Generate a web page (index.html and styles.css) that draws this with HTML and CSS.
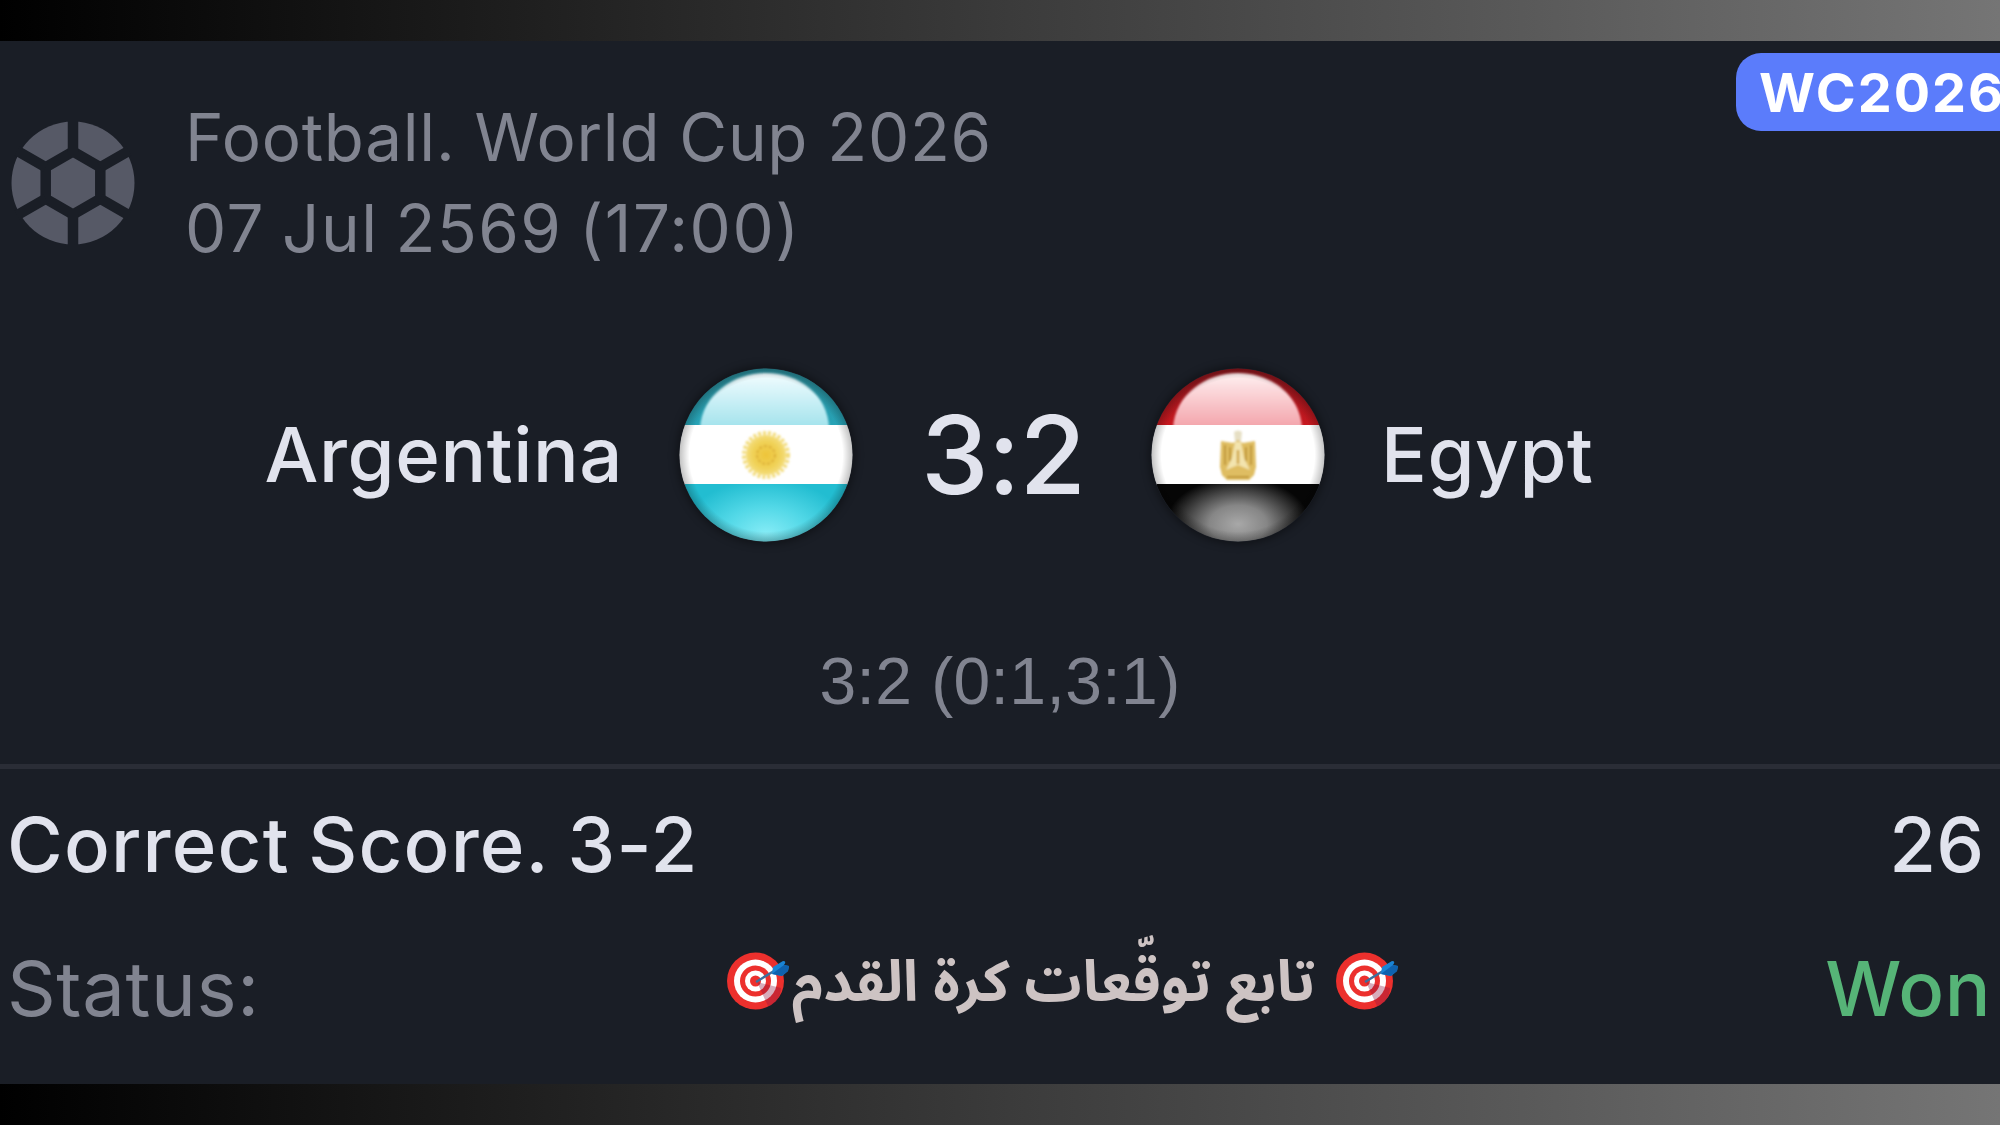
FILE: index.html
```html
<!DOCTYPE html>
<html lang="en">
<head>
    <meta charset="UTF-8">
    <title>Bet Slip</title>
    <link rel="stylesheet" href="styles.css">
</head>
<body>
    <div class="strip"></div>

    <div class="bet-card">
        <span class="badge">WC2026</span>

        <div class="event">
            <svg class="ball" viewBox="-62 -62 124 124">
                <circle r="61.5" fill="#565966"/>
                <g fill="none" stroke="#1a1e26" stroke-width="10.5">
                    <path d="M0-31.5 27.3-15.75V15.75L0 31.5-27.3 15.75V-15.75Z"/>
                    <path d="M0-31.5V-64M27.3-15.75 56-32.3M27.3 15.75 56 32.3M0 31.5V64M-27.3 15.75-56 32.3M-27.3-15.75-56-32.3"/>
                </g>
            </svg>
            <div class="event-info">
                <div class="league">Football. World Cup 2026</div>
                <div class="date">07 Jul 2569 (17:00)</div>
            </div>
        </div>

        <div class="match">
            <div class="team home">Argentina</div>
            <svg class="flag" viewBox="0 0 174 174">
                <defs>
                    <clipPath id="disc"><circle cx="87" cy="87" r="86.5"/></clipPath>
                    <filter id="soft"><feGaussianBlur stdDeviation="1"/></filter>
                    <linearGradient id="arTop" x1="0" y1="0" x2="0" y2="1">
                        <stop offset="0" stop-color="#2a8b98"/>
                        <stop offset="1" stop-color="#27a3b6"/>
                    </linearGradient>
                    <linearGradient id="arShine" x1="0" y1="0" x2="0" y2="1">
                        <stop offset="0" stop-color="#f2fdff"/>
                        <stop offset="1" stop-color="#a2e2ec"/>
                    </linearGradient>
                    <radialGradient id="arBottom" gradientUnits="userSpaceOnUse" cx="87" cy="166" r="84" gradientTransform="translate(0 58) scale(1 .65)">
                        <stop offset="0" stop-color="#85ecf6"/>
                        <stop offset=".5" stop-color="#52d8e7"/>
                        <stop offset="1" stop-color="#22bdd1"/>
                    </radialGradient>
                    <radialGradient id="edge">
                        <stop offset=".88" stop-color="#000" stop-opacity="0"/>
                        <stop offset="1" stop-color="#000" stop-opacity=".25"/>
                    </radialGradient>
                    <radialGradient id="sun">
                        <stop offset="0" stop-color="#edc43a"/>
                        <stop offset=".65" stop-color="#f0d156"/>
                        <stop offset="1" stop-color="#f4dd7c"/>
                    </radialGradient>
                </defs>
                <g clip-path="url(#disc)">
                    <rect width="174" height="58" fill="url(#arTop)"/>
                    <path d="M21 60C23 27 54 5 87 5s62 22 63 55Z" fill="url(#arShine)" filter="url(#soft)"/>
                    <rect y="57" width="174" height="60" fill="#fff"/>
                    <rect y="116" width="174" height="58" fill="url(#arBottom)"/>
                    <g filter="url(#soft)">
                        <circle cx="87" cy="87" r="22" fill="none" stroke="#f3dc7c" stroke-width="4" stroke-dasharray="3 2"/>
                        <circle cx="87" cy="87" r="20" fill="url(#sun)"/>
                        <circle cx="87" cy="87" r="9" fill="none" stroke="#dcb038" stroke-width="2" stroke-dasharray="3 2"/>
                    </g>
                    <circle cx="87" cy="87" r="87" fill="url(#edge)"/>
                </g>
            </svg>
            <div class="score">3:2</div>
            <svg class="flag" viewBox="0 0 174 174">
                <defs>
                    <linearGradient id="egTop" x1="0" y1="0" x2="0" y2="1">
                        <stop offset="0" stop-color="#8c161d"/>
                        <stop offset="1" stop-color="#c8181f"/>
                    </linearGradient>
                    <linearGradient id="egShine" x1="0" y1="0" x2="0" y2="1">
                        <stop offset="0" stop-color="#fff0f1"/>
                        <stop offset="1" stop-color="#f3a3aa"/>
                    </linearGradient>
                    <radialGradient id="egBottom" gradientUnits="userSpaceOnUse" cx="87" cy="154" r="72" gradientTransform="translate(0 56) scale(1 .65)">
                        <stop offset="0" stop-color="#a8a8a8"/>
                        <stop offset=".4" stop-color="#868686"/>
                        <stop offset="1" stop-color="#060606"/>
                    </radialGradient>
                </defs>
                <g clip-path="url(#disc)">
                    <rect width="174" height="58" fill="url(#egTop)"/>
                    <path d="M22 60C24 27 54 5 87 5s62 22 64 55Z" fill="url(#egShine)" filter="url(#soft)"/>
                    <rect y="57" width="174" height="60" fill="#fff"/>
                    <rect y="116" width="174" height="58" fill="url(#egBottom)"/>
                    <g filter="url(#soft)">
                        <path d="M83 64q4-3 8 0l-1 9h-6Z" fill="#e6dfc4"/>
                        <path d="M70 73l12 2 5-3 5 3 12-2 1 26-2 8-5 5H76l-5-5-2-8Z" fill="#dfbd62"/>
                        <path d="M84 74h6l3 16 6 12-12-5-12 5 6-12Z" fill="#f3e4ae"/>
                        <path d="M74 77v20M79 79v14M100 77v20M95 79v14M76 109h22" stroke="#bf9738" stroke-width="2" fill="none"/>
                        <path d="M87 82v14" stroke="#cfa644" stroke-width="2.500"/>
                    </g>
                    <circle cx="87" cy="87" r="87" fill="url(#edge)"/>
                </g>
            </svg>
            <div class="team away">Egypt</div>
        </div>

        <div class="periods">3:2 (0:1,3:1)</div>

        <div class="divider"></div>

        <div class="row bet">
            <span class="market">Correct Score. 3-2</span>
            <span class="odds">26</span>
        </div>

        <div class="row result">
            <span class="label">Status:</span>
            <div class="promo" dir="rtl">
                <svg class="target" viewBox="0 0 62 60">
                    <g id="target">
                        <circle cx="28.500" cy="30" r="28.500" fill="#ec302d"/>
                        <circle cx="28.500" cy="30" r="21.500" fill="#fff"/>
                        <circle cx="28.500" cy="30" r="15.500" fill="#ec302d"/>
                        <circle cx="28.500" cy="30" r="10.500" fill="#fff"/>
                        <circle cx="28.500" cy="30" r="5.500" fill="#ec302d"/>
                        <path d="M30 31 54 37C54 46 47 54 41 55Z" fill="#8c1440" opacity=".35"/>
                        <path d="M29 31 47 20" stroke="#3c6f9e" stroke-width="2.500"/>
                        <path d="M45 23 46 16 56 10Q60 10 57 14L62 15 61 20 55 25Z" fill="#1a84d4"/>
                        <path d="M45 23 57 14 62 15 61 20 55 25Z" fill="#0f62ae"/>
                    </g>
                </svg>
                <span class="promo-text">تابع توقّعات كرة القدم</span>
                <svg class="target" viewBox="0 0 62 60"><use href="#target"/></svg>
            </div>
            <span class="won">Won</span>
        </div>
    </div>

    <div class="strip"></div>
</body>
</html>
```
FILE: styles.css
```css
body {
    display: flex;
    flex-direction: column;
    height: 1125px;
    margin: 0;
    overflow: hidden;
    font-family: Inter, "Liberation Sans", sans-serif;
    background: #1a1e26;
    color: #e1e3ed;
}

.strip {
    flex: none;
    height: 41px;
    background: linear-gradient(to right, #000, #757575);
}

.bet-card {
    position: relative;
    flex: 1;
    overflow: hidden;
}

/* Badge runs off the right edge of the card */
.badge {
    position: absolute;
    top: 12px;
    left: 1736px;
    width: 300px;
    height: 78px;
    box-sizing: border-box;
    padding-left: 23px;
    border-radius: 25px;
    background: #5b7cfb;
    color: #fff;
    font-size: 54px;
    font-weight: 700;
    line-height: 80px;
    letter-spacing: 2px;
}

/* Event header */
.event {
    display: flex;
    align-items: center;
    gap: 50px;
    padding: 50.5px 0 0 11px;
}

.ball {
    width: 124px;
    height: 124px;
}

.event-info {
    color: #818490;
    font-size: 65.5px;
    line-height: 91.3px;
    white-space: nowrap;
}

.league {
    letter-spacing: 0.7px;
}

.date {
    letter-spacing: 1.5px;
    word-spacing: -3px;
}

/* Teams and score */
.match {
    display: grid;
    grid-template-columns: 679px 174px 298px 174px 1fr;
    align-items: center;
    margin-top: 94px;
}

.flag {
    width: 174px;
    height: 174px;
    border-radius: 50%;
    box-shadow: 0 0 8px 2px rgba(0, 0, 0, 0.4);
}

.team {
    padding-bottom: 2px;
    font-size: 76px;
    font-weight: 500;
    line-height: 92px;
    letter-spacing: 0.6px;
}

.home {
    padding-right: 56px;
    text-align: right;
}

.away {
    padding-left: 56px;
}

.score {
    padding-left: 2px;
    font-size: 108px;
    font-weight: 500;
    line-height: 174px;
    letter-spacing: -1px;
    text-align: center;
}

.periods {
    margin-top: 101px;
    color: #818490;
    font-family: "Liberation Sans", Arial, sans-serif;
    font-size: 66px;
    line-height: 76px;
    letter-spacing: 0.4px;
    text-align: center;
}

.divider {
    height: 5px;
    margin-top: 45px;
    background: #2a2d36;
}

/* Bet rows */
.row {
    display: flex;
    justify-content: space-between;
    padding: 0 16px 0 7px;
    font-size: 76px;
    line-height: 92px;
}

.bet {
    margin-top: 29px;
    font-weight: 500;
}

.market {
    letter-spacing: 1.2px;
    word-spacing: -3px;
}

.result {
    display: grid;
    grid-template-columns: 720px auto 1fr;
    padding-right: 9px;
    margin-top: 52px;
}

.label {
    color: #818490;
    letter-spacing: 0.6px;
}

.won {
    color: #56b477;
    font-weight: 450;
    letter-spacing: 0.6px;
    text-align: right;
}

.promo {
    display: flex;
    align-items: center;
    height: 78px;
}

.target {
    width: 62px;
    height: 60px;
}

.promo-text {
    padding-top: 3px;
    margin: 0 21px 0 3px;
    color: #cdc3c3;
    font-family: "Noto Sans Arabic", "Noto Sans", "DejaVu Sans", sans-serif;
    font-size: 57px;
    font-weight: 700;
    line-height: 76px;
    white-space: nowrap;
}
```
